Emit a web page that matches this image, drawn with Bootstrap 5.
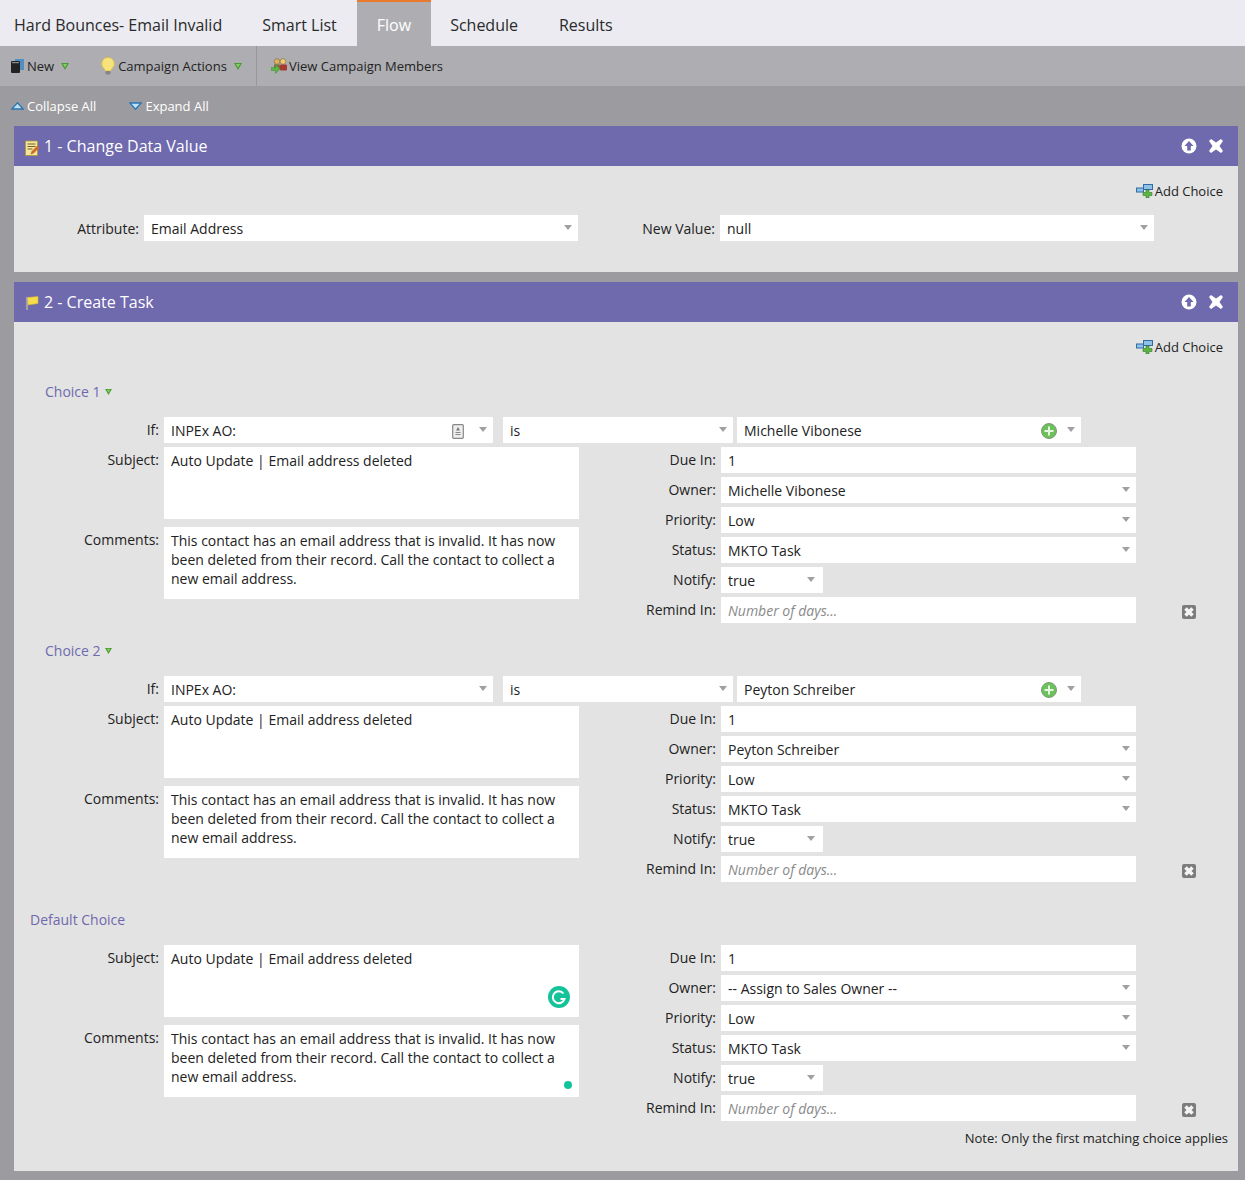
<!DOCTYPE html>
<html lang="en"><head><meta charset="utf-8"><title>Flow</title>
<link href="https://cdn.jsdelivr.net/npm/bootstrap@5.3.0/dist/css/bootstrap.min.css" rel="stylesheet">
<style>
html,body{height:100%}
body{background:#9c9ca0;font-family:"Open Sans","Liberation Sans",sans-serif;font-size:14px;color:#222;line-height:19px}
.tabbar{background:#ebebf1;height:46px;font-size:16px;line-height:22px}
.tabbar .tab{padding:14px 20px 0;height:46px;color:#2a2a2a}
.tabbar .tab.first{padding-left:14px}
.tabbar .tab.on{background:#aeaeb2;color:#fff;border-top:2px solid #e8792d;padding-top:12px}
.tabbar .tab.nudge{padding-left:19px;padding-right:21px}
.toolbar{background:#aeaeb2;height:40px;font-size:13px;color:#222;white-space:nowrap}
.toolbar .tool{height:40px}
.toolmain{width:257px;padding-left:11px;border-right:1px solid #98989c}
.toolview{padding-left:14px}
.ic-new{margin-right:3px}
.ic-caret{margin-left:7px}
.ic-bulb{margin:0 3px 0 32px}
.ic-members{margin-right:1px}
.subbar{height:40px;font-size:13px;color:#fff}
.ic-collapse{margin-left:11px;margin-right:3px}
.ic-expand{margin-left:33px;margin-right:3px}
.sheet{margin:0 7px 10px 14px;border-radius:0;border:0;background:#e3e3e3;--bs-card-bg:#e3e3e3}
.sheet.lastsheet{margin-bottom:9px}
.sheethead{background:#6f69ae;height:40px;color:#fff;font-size:16px;padding:0 14px 0 11px}
.ic-note{margin:3px 4px 0 0}
.ic-flag{margin:2px 5px 0 0}
.ic-x{margin-left:11px}
.addrow{height:50px;padding:0 15px 0 0;font-size:13px;gap:1px}
.addrow.tight{margin-bottom:-1px}
.fld.form-control{border:0;border-radius:0;background:#fff;height:26px;padding:2px 7px 0;font-size:14px;line-height:24px;color:#222;box-shadow:none}
input.fld.form-control{padding-top:0}
textarea.fld.form-control{height:72px;line-height:19px;padding:4px 7px;resize:none;overflow:hidden;min-height:0}
input.fld.form-control::placeholder{font-style:italic;color:#8a8a8a;opacity:1}
.sel{gap:8px}
.sel .val{flex:1;white-space:nowrap}
.caret{width:0;height:0;border-left:4.5px solid transparent;border-right:4.5px solid transparent;border-top:5px solid #a0a0a0;flex:none;margin:-4px -.5px 0 0}
.short .caret{margin-right:1.500px}
.lab{text-align:right;padding-right:5px;line-height:26px;white-space:nowrap}
.labl{width:150px;flex:none}
.labr{width:142px;flex:none}
.w-415{width:415px;flex:none}
.pchoice{color:#6f69ae;font-size:14px;height:20px;line-height:20px;margin-bottom:15px}
.head1{padding-left:31px}
.head2{padding-left:16px}
.ic-toggle{margin-left:4px}
.lcol{width:565px;flex:none}
.rcol{width:557px;flex:none}
.taskrows{gap:8px}
.rrows{gap:4px}
.remove{margin-left:46px;margin-top:8px}
.ifrow{height:26px;margin-bottom:4px}
.f-if{width:329px;flex:none}
.f-is{width:230px;flex:none;margin-left:10px}
.f-val{width:344px;flex:none;margin-left:4px}
.short{width:102px;flex:none}
.ic-tag{margin-right:7px}
.ic-plus{margin-right:2px}
.block-a{padding:10px 0 18px}
.block-b{padding-bottom:28px}
.notice{text-align:right;font-size:13px;padding:8px 10px 0 0;height:50px}
.attr{height:26px}
.attr .l1{width:130px;text-align:right;padding-right:5px;flex:none}
.attr .f1{width:434px;flex:none}
.attr .l2{width:142px;text-align:right;padding-right:5px;flex:none}
.attr .f2{width:434px;flex:none}
.attrwrap{padding-bottom:31px}
.ico{flex:none;display:block}
.grammarly{position:absolute;right:9px;bottom:9px}
.gdot{position:absolute;right:7px;bottom:8px;width:8px;height:8px;border-radius:50%;background:#15c39a}
.tagwrap{position:relative}
</style></head>
<body>
<svg class="d-none" aria-hidden="true">
  <symbol id="tri" viewBox="0 0 8 7"><path d="M0 0H8L4 7Z" fill="#4a9a35"/><path d="M2 1H6L4 4.500Z" fill="#86d066"/></symbol>
  <symbol id="upc" viewBox="0 0 16 16"><circle cx="8" cy="8" r="7.500" fill="#fff"/><path d="M8 3 12.500 8H9.800V12.500H6.200V8H3.500Z" fill="#6f69ae"/></symbol>
  <symbol id="xx" viewBox="0 0 16 16"><path d="M3 1 8 4.500 13 1 15 3 11.500 8 15 13 13 15 8 11.500 3 15 1 13 4.500 8 1 3Z" fill="#fff"/></symbol>
  <symbol id="addc" viewBox="0 0 18 14"><rect x="7.500" y=".5" width="9" height="5" fill="#8fc1e8" stroke="#2f6da3"/><rect x=".5" y="4" width="7" height="4" fill="#8fc1e8" stroke="#2f6da3"/><path d="M10 6h3v2.500h3v3h-3V14h-3v-2.500H7v-3h3Z" fill="#5fb544" stroke="#2f7d2a" stroke-width=".6"/></symbol>
  <symbol id="plus" viewBox="0 0 16 16"><circle cx="8" cy="8" r="7.500" fill="#6cc25a" stroke="#7f9a78"/><path d="M8 3.500v9M3.500 8h9" stroke="#e6f8df" stroke-width="2"/></symbol>
  <symbol id="rem" viewBox="0 0 14 14"><rect width="14" height="14" rx="2" fill="#7c7c7c"/><path d="M3.500 3.500 10.500 10.500M10.500 3.500 3.500 10.500" stroke="#f4f4f4" stroke-width="3.600"/></symbol>
</svg>
<ul class="nav tabbar flex-nowrap">
  <li class="tab first">Hard Bounces- Email Invalid</li>
  <li class="tab">Smart List</li>
  <li class="tab on">Flow</li>
  <li class="tab nudge">Schedule</li>
  <li class="tab">Results</li>
</ul>
<div class="toolbar d-flex align-items-center">
  <div class="tool toolmain d-flex align-items-center">
    <svg class="ico ic-new" width="13" height="14" viewBox="0 0 13 14"><rect x="4" y="0" width="9" height="11" fill="#4f8fc4"/><rect x="0" y="2" width="9" height="12" rx="1" fill="#222"/><rect x="1" y="3" width="7" height="1.200" fill="#8a8a8a"/></svg>
    <span>New</span>
    <svg class="ico ic-caret" width="8" height="7"><use href="#tri"/></svg>
    <svg class="ico ic-bulb" width="14" height="18" viewBox="0 0 14 18"><path d="M7 .5a6.300 6.300 0 0 0-3.800 11.300L4.500 14H9.500l1.300-2.200A6.300 6.300 0 0 0 7 .5Z" fill="#f7e37e" stroke="#d9bc3f" stroke-width=".8"/><rect x="4.500" y="14" width="5" height="3.500" rx="1.200" fill="#858585"/></svg>
    <span>Campaign Actions</span>
    <svg class="ico ic-caret" width="8" height="7"><use href="#tri"/></svg>
  </div>
  <div class="tool toolview d-flex align-items-center">
    <svg class="ico ic-members" width="17" height="16" viewBox="0 0 17 16"><circle cx="6" cy="3.500" r="2.800" fill="#e0b060" stroke="#6a5a2a" stroke-width=".5"/><rect x="3" y="6.500" width="6" height="5" fill="#8a6a3a"/><circle cx="12" cy="3.500" r="2.800" fill="#f0cc70" stroke="#6a5a2a" stroke-width=".5"/><rect x="9" y="6.500" width="7" height="6" rx="1" fill="#a63a32"/><path d="M0 9.500H4.500V6.500l4.500 4.500-4.500 4.500v-3H0Z" fill="#5cb548" stroke="#2f7d2a" stroke-width=".4"/></svg>
    <span>View Campaign Members</span>
  </div>
</div>
<div class="subbar d-flex align-items-center">
  <svg class="ico ic-collapse" width="13" height="8" viewBox="0 0 13 8"><path d="M6.500.8 12.200 7H.8Z" fill="#bfe0f5" stroke="#2a76b0" stroke-width="1.300"/></svg>
  <span>Collapse All</span>
  <svg class="ico ic-expand" width="13" height="8" viewBox="0 0 13 8"><path d="M6.500 7.200 12.200 1H.8Z" fill="#bfe0f5" stroke="#2a76b0" stroke-width="1.300"/></svg>
  <span>Expand All</span>
</div>

<section class="card sheet">
  <div class="sheethead d-flex align-items-center">
    <svg class="ico ic-note" width="15" height="16" viewBox="0 0 15 16"><rect x=".5" y="1" width="12" height="14.500" fill="#f4e79a" stroke="#a89540" stroke-width=".8"/><path d="M2.500 4h8M2.500 6.500h8M2.500 9h5" stroke="#6a6030"/><path d="M5.500 14.500l1-3 6-6 2 2-6 6Z" fill="#d0682a"/></svg>
    <span>1 - Change Data Value</span>
    <svg class="ico ms-auto" width="16" height="16"><use href="#upc"/></svg>
    <svg class="ico ic-x" width="16" height="16"><use href="#xx"/></svg>
  </div>
  <div class="addrow tight d-flex align-items-center justify-content-end">
    <svg class="ico" width="18" height="14"><use href="#addc"/></svg>
    <span>Add Choice</span>
  </div>
  <div class="attrwrap">
    <div class="attr d-flex align-items-center">
      <div class="l1">Attribute:</div>
      <div class="form-control fld sel f1 d-flex align-items-center"><span class="val">Email Address</span><i class="caret"></i></div>
      <div class="l2">New Value:</div>
      <div class="form-control fld sel f2 d-flex align-items-center"><span class="val">null</span><i class="caret"></i></div>
    </div>
  </div>
</section>

<section class="card sheet lastsheet">
  <div class="sheethead d-flex align-items-center">
    <svg class="ico ic-flag" width="14" height="16" viewBox="0 0 14 16"><path d="M2 2.500 13 1.500V8.500L3 10Z" fill="#f6dc4a" stroke="#d0b030" stroke-width=".6"/><path d="M2 2V15" stroke="#b7b0a0" stroke-width="1.600"/></svg>
    <span>2 - Create Task</span>
    <svg class="ico ms-auto" width="16" height="16"><use href="#upc"/></svg>
    <svg class="ico ic-x" width="16" height="16"><use href="#xx"/></svg>
  </div>
  <div class="addrow d-flex align-items-center justify-content-end">
    <svg class="ico" width="18" height="14"><use href="#addc"/></svg>
    <span>Add Choice</span>
  </div>

  <!-- Choice 1 -->
  <div class="block-a">
    <div class="pchoice head1 d-flex align-items-center">Choice 1
      <svg class="ico ic-toggle" width="7" height="6"><use href="#tri"/></svg></div>
    <div class="ifrow d-flex align-items-center">
      <div class="lab labl">If:</div>
      <div class="form-control fld sel f-if d-flex align-items-center"><span class="val">INPEx AO:</span>
        <svg class="ico ic-tag" width="12" height="15" viewBox="0 0 12 15"><rect x=".7" y=".7" width="10.600" height="13.600" rx="1" fill="#eee" stroke="#888" stroke-width="1.200"/><path d="M6 3 8 6.500H4Z" fill="#777"/><path d="M3.500 8.500h5M3.500 10.500h5" stroke="#888"/></svg>
        <i class="caret"></i></div>
      <div class="form-control fld sel f-is d-flex align-items-center"><span class="val">is</span><i class="caret"></i></div>
      <div class="form-control fld sel f-val d-flex align-items-center"><span class="val">Michelle Vibonese</span>
        <svg class="ico ic-plus" width="16" height="16"><use href="#plus"/></svg>
        <i class="caret"></i></div>
    </div>
    <div class="d-flex">
      <div class="lcol d-flex flex-column taskrows">
        <div class="d-flex"><div class="lab labl">Subject:</div><textarea class="form-control fld w-415" readonly>Auto Update | Email address deleted</textarea></div>
        <div class="d-flex"><div class="lab labl">Comments:</div><textarea class="form-control fld w-415" readonly>This contact has an email address that is invalid. It has now been deleted from their record. Call the contact to collect a new email address.</textarea></div>
      </div>
      <div class="rcol d-flex flex-column rrows">
        <div class="d-flex"><div class="lab labr">Due In:</div><input class="form-control fld w-415" value="1" readonly></div>
        <div class="d-flex"><div class="lab labr">Owner:</div><div class="form-control fld sel w-415 d-flex align-items-center"><span class="val">Michelle Vibonese</span><i class="caret"></i></div></div>
        <div class="d-flex"><div class="lab labr">Priority:</div><div class="form-control fld sel w-415 d-flex align-items-center"><span class="val">Low</span><i class="caret"></i></div></div>
        <div class="d-flex"><div class="lab labr">Status:</div><div class="form-control fld sel w-415 d-flex align-items-center"><span class="val">MKTO Task</span><i class="caret"></i></div></div>
        <div class="d-flex"><div class="lab labr">Notify:</div><div class="form-control fld sel short d-flex align-items-center"><span class="val">true</span><i class="caret"></i></div></div>
        <div class="d-flex"><div class="lab labr">Remind In:</div><input class="form-control fld w-415" placeholder="Number of days..." readonly>
          <svg class="ico remove" width="14" height="14"><use href="#rem"/></svg></div>
      </div>
    </div>
  </div>

  <!-- Choice 2 -->
  <div class="block-b">
    <div class="pchoice head1 d-flex align-items-center">Choice 2
      <svg class="ico ic-toggle" width="7" height="6"><use href="#tri"/></svg></div>
    <div class="ifrow d-flex align-items-center">
      <div class="lab labl">If:</div>
      <div class="form-control fld sel f-if d-flex align-items-center"><span class="val">INPEx AO:</span><i class="caret"></i></div>
      <div class="form-control fld sel f-is d-flex align-items-center"><span class="val">is</span><i class="caret"></i></div>
      <div class="form-control fld sel f-val d-flex align-items-center"><span class="val">Peyton Schreiber</span>
        <svg class="ico ic-plus" width="16" height="16"><use href="#plus"/></svg>
        <i class="caret"></i></div>
    </div>
    <div class="d-flex">
      <div class="lcol d-flex flex-column taskrows">
        <div class="d-flex"><div class="lab labl">Subject:</div><textarea class="form-control fld w-415" readonly>Auto Update | Email address deleted</textarea></div>
        <div class="d-flex"><div class="lab labl">Comments:</div><textarea class="form-control fld w-415" readonly>This contact has an email address that is invalid. It has now been deleted from their record. Call the contact to collect a new email address.</textarea></div>
      </div>
      <div class="rcol d-flex flex-column rrows">
        <div class="d-flex"><div class="lab labr">Due In:</div><input class="form-control fld w-415" value="1" readonly></div>
        <div class="d-flex"><div class="lab labr">Owner:</div><div class="form-control fld sel w-415 d-flex align-items-center"><span class="val">Peyton Schreiber</span><i class="caret"></i></div></div>
        <div class="d-flex"><div class="lab labr">Priority:</div><div class="form-control fld sel w-415 d-flex align-items-center"><span class="val">Low</span><i class="caret"></i></div></div>
        <div class="d-flex"><div class="lab labr">Status:</div><div class="form-control fld sel w-415 d-flex align-items-center"><span class="val">MKTO Task</span><i class="caret"></i></div></div>
        <div class="d-flex"><div class="lab labr">Notify:</div><div class="form-control fld sel short d-flex align-items-center"><span class="val">true</span><i class="caret"></i></div></div>
        <div class="d-flex"><div class="lab labr">Remind In:</div><input class="form-control fld w-415" placeholder="Number of days..." readonly>
          <svg class="ico remove" width="14" height="14"><use href="#rem"/></svg></div>
      </div>
    </div>
  </div>

  <!-- Default -->
  <div>
    <div class="pchoice head2">Default Choice</div>
    <div class="d-flex">
      <div class="lcol d-flex flex-column taskrows">
        <div class="d-flex"><div class="lab labl">Subject:</div><div class="tagwrap d-flex"><textarea class="form-control fld w-415" readonly>Auto Update | Email address deleted</textarea>
          <svg class="grammarly" width="22" height="22" viewBox="0 0 22 22"><circle cx="11" cy="11" r="11" fill="#15c39a"/><path d="M15.500 7.500A6 6 0 1 0 16.500 13H12.500" fill="none" stroke="#fff" stroke-width="2"/></svg></div></div>
        <div class="d-flex"><div class="lab labl">Comments:</div><div class="tagwrap d-flex"><textarea class="form-control fld w-415" readonly>This contact has an email address that is invalid. It has now been deleted from their record. Call the contact to collect a new email address.</textarea><span class="gdot"></span></div></div>
      </div>
      <div class="rcol d-flex flex-column rrows">
        <div class="d-flex"><div class="lab labr">Due In:</div><input class="form-control fld w-415" value="1" readonly></div>
        <div class="d-flex"><div class="lab labr">Owner:</div><div class="form-control fld sel w-415 d-flex align-items-center"><span class="val">-- Assign to Sales Owner --</span><i class="caret"></i></div></div>
        <div class="d-flex"><div class="lab labr">Priority:</div><div class="form-control fld sel w-415 d-flex align-items-center"><span class="val">Low</span><i class="caret"></i></div></div>
        <div class="d-flex"><div class="lab labr">Status:</div><div class="form-control fld sel w-415 d-flex align-items-center"><span class="val">MKTO Task</span><i class="caret"></i></div></div>
        <div class="d-flex"><div class="lab labr">Notify:</div><div class="form-control fld sel short d-flex align-items-center"><span class="val">true</span><i class="caret"></i></div></div>
        <div class="d-flex"><div class="lab labr">Remind In:</div><input class="form-control fld w-415" placeholder="Number of days..." readonly>
          <svg class="ico remove" width="14" height="14"><use href="#rem"/></svg></div>
      </div>
    </div>
    <div class="notice">Note: Only the first matching choice applies</div>
  </div>
</section>
<script src="https://cdn.jsdelivr.net/npm/bootstrap@5.3.0/dist/js/bootstrap.bundle.min.js"></script>
</body></html>
